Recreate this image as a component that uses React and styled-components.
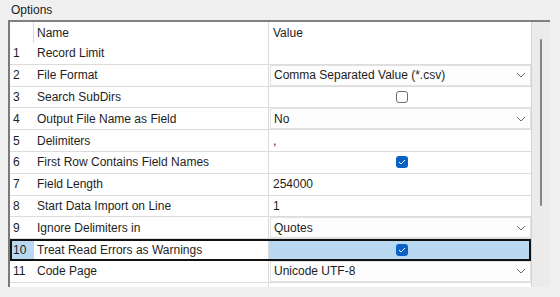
import React from "react";
import styled, { createGlobalStyle } from "styled-components";

const Global = createGlobalStyle`
  html, body {
    margin: 0;
    background: #f0f0f0;
    font-family: "Liberation Sans", Arial, sans-serif;
    font-size: 12px;
    color: #1e1e1e;
  }
`;

const Panel = styled.div`
  width: 560px;
  height: 297px;
  padding-left: 8px;
  box-sizing: border-box;
`;

const Title = styled.div`
  height: 20px;
  line-height: 20px;
  padding-left: 3px;
  color: #202020;
`;

const Frame = styled.div`
  display: flex;
  width: 542px;
  height: 267px;
  border-top: 2px solid #808080;
  border-left: 2px solid #7a7a7a;
  box-sizing: border-box;
`;

const Table = styled.div`
  flex: 1;
  background: #fff;
  border-right: 1px solid #d4d4d4;
  display: flex;
  flex-direction: column;
  overflow: hidden;
`;

const Row = styled.div`
  display: grid;
  grid-template-columns: 24px 235px 1fr;
  height: ${p => (p.$header ? "21px" : "21.8px")};
  flex: none;
  box-sizing: border-box;
  border-bottom: ${p => (p.$header ? "none" : "1px solid #dcdcdc")};
  outline: ${p => (p.$selected ? "2px solid #111" : "none")};
  outline-offset: -2px;
  position: relative;
`;

const Cell = styled.div`
  display: flex;
  align-items: center;
  padding-left: ${p => p.$pad || 3}px;
  white-space: nowrap;
  background: ${p => (p.$sel ? "#b9d8f2" : "transparent")};
  border-right: ${p => (p.$line ? "1px solid #dadada" : "none")};
  justify-content: ${p => (p.$center ? "center" : "flex-start")};
`;

const Filler = styled.div`
  flex: 1;
  display: grid;
  grid-template-columns: 259px 1fr;
`;

const Combo = styled.div`
  flex: 1;
  align-self: stretch;
  display: flex;
  align-items: center;
  justify-content: space-between;
  padding: 0 4px 0 3px;
  margin-left: -3px;
  background: #fdfdfd;
  border: 1px solid #e2e2e2;
`;

const Box = styled.div`
  width: 12px;
  height: 12px;
  border-radius: 3px;
  box-sizing: border-box;
  border: ${p => (p.$checked ? "none" : "1px solid #6e6e6e")};
  background: ${p => (p.$checked ? "#0b62c4" : "#fff")};
  display: flex;
  align-items: center;
  justify-content: center;
`;

const Scrollbar = styled.div`
  width: 18px;
  background: #ebebeb;
  display: flex;
  justify-content: center;
  padding-top: 17px;
  box-sizing: border-box;
`;

const Thumb = styled.div`
  width: 2px;
  height: 167px;
  border-radius: 1px;
  background: #858585;
`;

const Chevron = () => (
  <svg width="10" height="6" viewBox="0 0 10 6">
    <path d="M1 1l4 4 4-4" fill="none" stroke="#6a6a6a" strokeWidth="1" />
  </svg>
);

const Check = ({ checked }) => (
  <Box $checked={checked}>
    {checked && (
      <svg width="8" height="6" viewBox="0 0 8 6">
        <path d="M1 3l2 2 4-4" fill="none" stroke="#fff" strokeWidth="1" />
      </svg>
    )}
  </Box>
);

const rows = [
  { name: "Record Limit", value: "" },
  { name: "File Format", value: "Comma Separated Value (*.csv)", combo: true },
  { name: "Search SubDirs", check: false },
  { name: "Output File Name as Field", value: "No", combo: true },
  { name: "Delimiters", value: "," },
  { name: "First Row Contains Field Names", check: true },
  { name: "Field Length", value: "254000" },
  { name: "Start Data Import on Line", value: "1" },
  { name: "Ignore Delimiters in", value: "Quotes", combo: true },
  { name: "Treat Read Errors as Warnings", check: true, selected: true },
  { name: "Code Page", value: "Unicode UTF-8", combo: true },
];

const Value = ({ row }) => {
  if (row.check !== undefined) {
    return (
      <Cell $center $sel={row.selected}>
        <Check checked={row.check} />
      </Cell>
    );
  }
  if (row.combo) {
    return (
      <Cell $pad={4}>
        <Combo>
          <span>{row.value}</span>
          <Chevron />
        </Combo>
      </Cell>
    );
  }
  return <Cell $pad={4}>{row.value}</Cell>;
};

export default function App() {
  return (
    <>
      <Global />
      <Panel>
        <Title>Options</Title>
        <Frame>
          <Table>
            <Row $header>
              <Cell $line />
              <Cell $line>Name</Cell>
              <Cell $pad={4}>Value</Cell>
            </Row>
            {rows.map((r, i) => (
              <Row key={r.name} $selected={r.selected}>
                <Cell $sel={r.selected}>{i + 1}</Cell>
                <Cell $line>{r.name}</Cell>
                <Value row={r} />
              </Row>
            ))}
            <Filler>
              <Cell $line />
            </Filler>
          </Table>
          <Scrollbar>
            <Thumb />
          </Scrollbar>
        </Frame>
      </Panel>
    </>
  );
}
